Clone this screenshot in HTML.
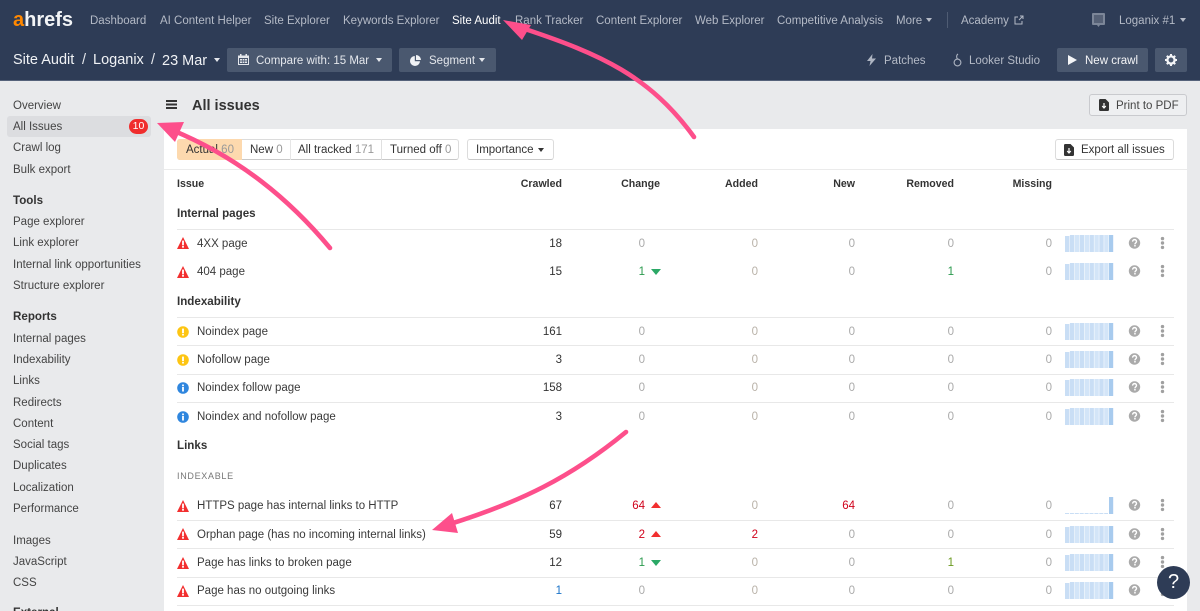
<!DOCTYPE html>
<html><head><meta charset="utf-8"><title>All issues</title>
<style>
*{box-sizing:border-box}
html,body{margin:0;padding:0;width:1200px;height:611px;overflow:hidden}
body{position:relative;background:#e9eaec;font-family:"Liberation Sans",sans-serif;font-size:11.5px;color:#333}
#p{position:absolute;left:0;top:0;width:1200px;height:611px;overflow:hidden}
.t{position:absolute;white-space:nowrap;line-height:16px;height:16px;margin-top:1px}
.n{top:12px;color:#b4bac6}
.hb{position:absolute;top:48px;height:24px;background:#4a586f;border-radius:2px}
.w{color:#e4e7ec}
.s{left:13px;color:#444}
.sb{left:13px;font-weight:bold;color:#333;font-size:11.6px}
.h{font-weight:bold;font-size:10.6px;top:175px;color:#333}
.g{left:177px;font-weight:bold;font-size:11.6px;color:#333}
.line{position:absolute;left:177px;width:997px;height:1px;background:#e8e8e8}
.r{position:absolute;left:0;width:1200px;height:16px;line-height:16px;margin-top:1px}
.r>span{position:absolute;white-space:nowrap}
.l{left:197px;color:#3a3a3a}
.c1{right:638px;color:#333}
.c2{right:555px;color:#aaa}
.c3{right:442px;color:#b9b2a8}
.c4{right:345px;color:#aaa}
.c5{right:246px;color:#aaa}
.c6{right:148px;color:#aaa}
.red{color:#d0021b!important}
.grn{color:#2b9a4e!important}
.r svg{position:absolute;left:0;top:0;overflow:visible;margin-top:-1px}
.btn{position:absolute;background:#fff;border:1px solid #dcdcdc;border-bottom-color:#c9c9c9;border-radius:3px}
.car{position:absolute;width:0;height:0;border-left:3.5px solid transparent;border-right:3.5px solid transparent;border-top:4px solid currentColor}
.gy{color:#999}
</style></head><body><div id="p">
<svg width="0" height="0" style="position:absolute">
<defs>
<symbol id="warn" viewBox="0 0 12 11" preserveAspectRatio="none" overflow="visible"><path d="M6 0 12 11H0Z" fill="#f22f2f"/><rect x="5.1" y="3.3" width="1.8" height="4.2" fill="#fff"/><rect x="5.1" y="8.1" width="1.8" height="1.7" fill="#fff"/></symbol>
<symbol id="yel" viewBox="0 0 12 12"><circle cx="6" cy="6" r="5.8" fill="#fdc513"/><rect x="5.1" y="2.6" width="1.8" height="4.4" fill="#fff"/><rect x="5.1" y="7.8" width="1.8" height="1.7" fill="#fff"/></symbol>
<symbol id="blu" viewBox="0 0 12 12"><circle cx="6" cy="6" r="5.8" fill="#2f86de"/><rect x="5.1" y="5" width="1.8" height="4.5" fill="#fff"/><rect x="5.1" y="2.5" width="1.8" height="1.7" fill="#fff"/></symbol>
<symbol id="bars" viewBox="0 0 50 17" overflow="visible">
<g fill="#c9def5"><rect x="0" y="1" width="4.4" height="16"/><rect x="4.9" y="0" width="4.4" height="17"/><rect x="9.8" y="0" width="4.4" height="17" fill="#d3e5f8"/><rect x="14.7" y="0" width="4.4" height="17"/><rect x="19.6" y="0" width="4.4" height="17" fill="#d3e5f8"/><rect x="24.5" y="0" width="4.4" height="17"/><rect x="29.4" y="0" width="4.4" height="17" fill="#d3e5f8"/><rect x="34.3" y="0" width="4.4" height="17"/><rect x="39.2" y="0" width="4.4" height="17" fill="#d3e5f8"/></g>
<rect x="44" y="0" width="4.2" height="17" fill="#a8cbee"/></symbol>
<symbol id="low" viewBox="0 0 50 17" overflow="visible">
<path d="M0 16.5H43" stroke="#c9def5" stroke-width="1" stroke-dasharray="4 .9"/><rect x="44" y="0" width="4.2" height="17" fill="#a8cbee"/></symbol>
<symbol id="tail" viewBox="0 0 120 20" overflow="visible">
<circle cx="70.5" cy="10" r="5.7" fill="#aaa"/><path d="M68.6 8.6c0-2.6 3.9-2.6 3.9-.2 0 1.5-1.6 1.5-1.6 3" fill="none" stroke="#fff" stroke-width="1.4"/><rect x="70.2" y="12" width="1.5" height="1.5" fill="#fff"/>
<circle cx="98.5" cy="5.6" r="1.7" fill="#a0a0a0"/><circle cx="98.5" cy="10" r="1.7" fill="#a0a0a0"/><circle cx="98.5" cy="14.4" r="1.7" fill="#a0a0a0"/></symbol>
<symbol id="doc" viewBox="0 0 10 12"><path d="M0 1.2C0 .5.5 0 1.2 0H6.5L10 3.5V10.8C10 11.5 9.5 12 8.8 12H1.2C.5 12 0 11.5 0 10.8Z" fill="#333"/><path d="M5 4V8.5M3.2 7 5 9 6.8 7" stroke="#fff" stroke-width="1.2" fill="none"/></symbol>
</defs></svg>

<!-- header -->
<div style="position:absolute;left:0;top:0;width:1200px;height:81px;background:#2e3c56;border-bottom:1px solid #55627a"></div>
<span class="t" style="left:13px;top:10px;font-size:20px;line-height:18px;height:18px;font-weight:bold;color:#f2f4f6"><span style="color:#ff8800">a</span>hrefs</span>
<span class="t n" style="left:90px">Dashboard</span>
<span class="t n" style="left:160px">AI Content Helper</span>
<span class="t n" style="left:264px">Site Explorer</span>
<span class="t n" style="left:343px">Keywords Explorer</span>
<span class="t n" style="left:452px;color:#fff">Site Audit</span>
<span class="t n" style="left:515px">Rank Tracker</span>
<span class="t n" style="left:596px">Content Explorer</span>
<span class="t n" style="left:695px">Web Explorer</span>
<span class="t n" style="left:777px">Competitive Analysis</span>
<span class="t n" style="left:896px">More</span>
<span class="car" style="left:926px;top:18px;color:#b4bac6"></span>
<div style="position:absolute;left:947px;top:12px;width:1px;height:16px;background:#4f5c73"></div>
<span class="t n" style="left:961px">Academy</span>
<svg style="position:absolute;left:1014px;top:15px" width="10" height="10" viewBox="0 0 10 10" fill="none" stroke="#b4bac6" stroke-width="1"><path d="M4 2H1V9H8V6M5 5 9 1M6 1H9V4"/></svg>
<svg style="position:absolute;left:1092px;top:13px" width="13" height="14" viewBox="0 0 13 14"><path d="M1 0H12A1 1 0 0 1 13 1V11A1 1 0 0 1 12 12H8L6.5 14 5 12H1A1 1 0 0 1 0 11V1A1 1 0 0 1 1 0Z" fill="#7c8698"/><rect x="2" y="2" width="9" height="8" fill="#566176"/></svg>
<span class="t n" style="left:1119px">Loganix #1</span>
<span class="car" style="left:1180px;top:18px;color:#b4bac6"></span>

<span class="t" style="left:13px;top:51px;font-size:14.5px;color:#f0f2f5">Site Audit</span>
<span class="t" style="left:82px;top:51px;font-size:14.5px;color:#e4e7ec">/</span>
<span class="t" style="left:93px;top:51px;font-size:14.5px;color:#f0f2f5">Loganix</span>
<span class="t" style="left:151px;top:51px;font-size:14.5px;color:#e4e7ec">/</span>
<span class="t" style="left:162px;top:52px;font-size:14.5px;color:#f0f2f5">23 Mar</span>
<span class="car" style="left:214px;top:58px;color:#e4e7ec"></span>
<div class="hb" style="left:227px;width:165px"></div>
<svg style="position:absolute;left:238px;top:54px" width="11" height="11" viewBox="0 0 11 11"><path d="M0 1.5H11V11H0Z" fill="#e4e7ec"/><rect x="2" y="0" width="1.5" height="2.5" fill="#e4e7ec"/><rect x="7.5" y="0" width="1.5" height="2.5" fill="#e4e7ec"/><path d="M1 4H10V10H1Z" fill="#4a586f"/><path d="M2 5H4V6.5H2ZM4.6 5H6.4V6.5H4.6ZM7 5H9V6.5H7ZM2 7.5H4V9H2ZM4.6 7.5H6.4V9H4.6ZM7 7.5H9V9H7Z" fill="#e4e7ec"/></svg>
<span class="t w" style="left:256px;top:52px">Compare with: 15 Mar</span>
<span class="car" style="left:376px;top:58px;color:#e4e7ec"></span>
<div class="hb" style="left:399px;width:97px"></div>
<svg style="position:absolute;left:410px;top:55px" width="11" height="11" viewBox="0 0 11 11"><path d="M4.8 1A5 5 0 1 0 10 6.2H4.8Z" fill="#f0f2f5"/><path d="M6 0A5 5 0 0 1 11 5H6Z" fill="#f0f2f5"/></svg>
<span class="t w" style="left:429px;top:52px">Segment</span>
<span class="car" style="left:479px;top:58px;color:#e4e7ec"></span>

<svg style="position:absolute;left:867px;top:54px" width="9" height="12" viewBox="0 0 9 12"><path d="M5.5 0 0 7H3.5L2.5 12 9 4.5H5Z" fill="#aeb5c2"/></svg>
<span class="t n" style="left:884px;top:52px">Patches</span>
<svg style="position:absolute;left:953px;top:53px" width="9" height="14" viewBox="0 0 9 14" fill="none" stroke="#aeb5c2" stroke-width="1.1"><circle cx="4.5" cy="9.5" r="3.4"/><path d="M4.5 6C3 4 3.5 2 5 1"/></svg>
<span class="t n" style="left:969px;top:52px">Looker Studio</span>
<div class="hb" style="left:1057px;width:91px"></div>
<svg style="position:absolute;left:1068px;top:55px" width="9" height="10" viewBox="0 0 9 10"><path d="M0 0 9 5 0 10Z" fill="#f4f5f7"/></svg>
<span class="t" style="left:1085px;top:52px;color:#f4f5f7">New crawl</span>
<div class="hb" style="left:1155px;width:32px"></div>
<svg style="position:absolute;left:1165px;top:54px" width="12" height="12" viewBox="0 0 12 12"><circle cx="6" cy="6" r="3.6" fill="none" stroke="#f4f5f7" stroke-width="2.3"/><path d="M6 0V2M6 10V12M0 6H2M10 6H12M1.8 1.8 3.2 3.2M8.8 8.8 10.2 10.2M1.8 10.2 3.2 8.8M8.8 3.2 10.2 1.8" stroke="#f4f5f7" stroke-width="2"/></svg>

<!-- sidebar -->
<span class="t s" style="top:97px">Overview</span>
<div style="position:absolute;left:7px;top:116px;width:144px;height:21px;background:#dcdde0;border-radius:3px"></div>
<span class="t s" style="top:118px">All Issues</span>
<div style="position:absolute;left:129px;top:119px;width:19px;height:15px;background:#f02d2d;border-radius:8px;color:#fff;font-size:10.5px;line-height:15px;text-align:center">10</div>
<span class="t s" style="top:139px">Crawl log</span>
<span class="t s" style="top:161px">Bulk export</span>
<span class="t sb" style="top:192px">Tools</span>
<span class="t s" style="top:213px">Page explorer</span>
<span class="t s" style="top:234px">Link explorer</span>
<span class="t s" style="top:256px">Internal link opportunities</span>
<span class="t s" style="top:277px">Structure explorer</span>
<span class="t sb" style="top:308px">Reports</span>
<span class="t s" style="top:330px">Internal pages</span>
<span class="t s" style="top:351px">Indexability</span>
<span class="t s" style="top:372px">Links</span>
<span class="t s" style="top:394px">Redirects</span>
<span class="t s" style="top:415px">Content</span>
<span class="t s" style="top:436px">Social tags</span>
<span class="t s" style="top:457px">Duplicates</span>
<span class="t s" style="top:479px">Localization</span>
<span class="t s" style="top:500px">Performance</span>
<span class="t s" style="top:532px">Images</span>
<span class="t s" style="top:553px">JavaScript</span>
<span class="t s" style="top:574px">CSS</span>
<span class="t sb" style="top:604px">External</span>

<!-- title -->
<svg style="position:absolute;left:166px;top:100px" width="11" height="9" viewBox="0 0 11 9"><path d="M0 0H11V2H0ZM0 3.5H11V5.5H0ZM0 7H11V9H0Z" fill="#333"/></svg>
<span class="t" style="left:192px;top:97px;font-size:14.5px;font-weight:bold;color:#333">All issues</span>
<div class="btn" style="left:1089px;top:94px;width:98px;height:22px;background:#eeeff1;border-color:#c9cace"></div>
<svg style="position:absolute;left:1099px;top:99px;width:10px;height:12px"><use href="#doc"/></svg>
<span class="t" style="left:1116px;top:97px;color:#444">Print to PDF</span>

<!-- panel -->
<div style="position:absolute;left:164px;top:129px;width:1023px;height:482px;background:#fff"></div>
<div class="btn" style="left:177px;top:139px;width:282px;height:21px"></div>
<div style="position:absolute;left:177px;top:139px;width:65px;height:21px;background:#fdd9ae;border-radius:3px 0 0 3px"></div>
<div style="position:absolute;left:290px;top:139px;width:1px;height:21px;background:#e6e6e6"></div>
<div style="position:absolute;left:381px;top:139px;width:1px;height:21px;background:#e0e0e0"></div>
<span class="t" style="left:186px;top:141px">Actual <span class="gy">60</span></span>
<span class="t" style="left:250px;top:141px">New <span class="gy">0</span></span>
<span class="t" style="left:298px;top:141px">All tracked <span class="gy">171</span></span>
<span class="t" style="left:390px;top:141px">Turned off <span class="gy">0</span></span>
<div class="btn" style="left:467px;top:139px;width:87px;height:21px"></div>
<span class="t" style="left:476px;top:141px">Importance</span>
<span class="car" style="left:538px;top:148px;color:#333"></span>
<div class="btn" style="left:1055px;top:139px;width:119px;height:21px"></div>
<svg style="position:absolute;left:1064px;top:144px;width:10px;height:12px"><use href="#doc"/></svg>
<span class="t" style="left:1081px;top:141px">Export all issues</span>
<div style="position:absolute;left:164px;top:169px;width:1023px;height:1px;background:#ebebeb"></div>

<span class="t h" style="left:177px">Issue</span>
<span class="t h" style="right:638px">Crawled</span>
<span class="t h" style="right:540px">Change</span>
<span class="t h" style="right:442px">Added</span>
<span class="t h" style="right:345px">New</span>
<span class="t h" style="right:246px">Removed</span>
<span class="t h" style="right:148px">Missing</span>

<span class="t g" style="top:205px">Internal pages</span>
<div class="line" style="top:229px"></div>
<div class="r" style="top:235px"><svg width="12" height="12" style="left:177px;top:2px"><use href="#warn"/></svg><span class="l">4XX page</span><span class="c1">18</span><span class="c2">0</span><span class="c3">0</span><span class="c4">0</span><span class="c5">0</span><span class="c6">0</span><svg width="50" height="17" style="left:1065px;top:0"><use href="#bars"/></svg><svg width="120" height="20" style="left:1064px;top:-2px"><use href="#tail"/></svg></div>
<div class="r" style="top:263px"><svg width="12" height="12" style="left:177px;top:3px"><use href="#warn"/></svg><span class="l">404 page</span><span class="c1">15</span><span class="c2 grn">1</span><svg width="10" height="6" style="left:651px;top:6px"><path d="M0 0H10L5 6Z" fill="#2ba866"/></svg><span class="c3">0</span><span class="c4">0</span><span class="c5 grn">1</span><span class="c6">0</span><svg width="50" height="17" style="left:1065px;top:0"><use href="#bars"/></svg><svg width="120" height="20" style="left:1064px;top:-2px"><use href="#tail"/></svg></div>

<span class="t g" style="top:293px">Indexability</span>
<div class="line" style="top:317px"></div>
<div class="r" style="top:323px"><svg width="12" height="12" style="left:177px;top:3px"><use href="#yel"/></svg><span class="l">Noindex page</span><span class="c1">161</span><span class="c2">0</span><span class="c3">0</span><span class="c4">0</span><span class="c5">0</span><span class="c6">0</span><svg width="50" height="17" style="left:1065px;top:0"><use href="#bars"/></svg><svg width="120" height="20" style="left:1064px;top:-2px"><use href="#tail"/></svg></div>
<div class="line" style="top:345px"></div>
<div class="r" style="top:351px"><svg width="12" height="12" style="left:177px;top:3px"><use href="#yel"/></svg><span class="l">Nofollow page</span><span class="c1">3</span><span class="c2">0</span><span class="c3">0</span><span class="c4">0</span><span class="c5">0</span><span class="c6">0</span><svg width="50" height="17" style="left:1065px;top:0"><use href="#bars"/></svg><svg width="120" height="20" style="left:1064px;top:-2px"><use href="#tail"/></svg></div>
<div class="line" style="top:374px"></div>
<div class="r" style="top:379px"><svg width="12" height="12" style="left:177px;top:3px"><use href="#blu"/></svg><span class="l">Noindex follow page</span><span class="c1">158</span><span class="c2">0</span><span class="c3">0</span><span class="c4">0</span><span class="c5">0</span><span class="c6">0</span><svg width="50" height="17" style="left:1065px;top:0"><use href="#bars"/></svg><svg width="120" height="20" style="left:1064px;top:-2px"><use href="#tail"/></svg></div>
<div class="line" style="top:402px"></div>
<div class="r" style="top:408px"><svg width="12" height="12" style="left:177px;top:3px"><use href="#blu"/></svg><span class="l">Noindex and nofollow page</span><span class="c1">3</span><span class="c2">0</span><span class="c3">0</span><span class="c4">0</span><span class="c5">0</span><span class="c6">0</span><svg width="50" height="17" style="left:1065px;top:0"><use href="#bars"/></svg><svg width="120" height="20" style="left:1064px;top:-2px"><use href="#tail"/></svg></div>

<span class="t g" style="top:437px">Links</span>
<span class="t" style="left:177px;top:467px;font-size:9px;letter-spacing:.7px;color:#777">INDEXABLE</span>

<div class="r" style="top:497px"><svg width="12" height="12" style="left:177px;top:3px"><use href="#warn"/></svg><span class="l">HTTPS page has internal links to HTTP</span><span class="c1">67</span><span class="c2 red">64</span><svg width="10" height="6" style="left:651px;top:5px"><path d="M5 0 10 6H0Z" fill="#f22f2f"/></svg><span class="c3">0</span><span class="c4 red">64</span><span class="c5">0</span><span class="c6">0</span><svg width="50" height="17" style="left:1065px;top:0"><use href="#low"/></svg><svg width="120" height="20" style="left:1064px;top:-2px"><use href="#tail"/></svg></div>
<div class="line" style="top:520px"></div>
<div class="r" style="top:526px"><svg width="12" height="12" style="left:177px;top:2px"><use href="#warn"/></svg><span class="l">Orphan page (has no incoming internal links)</span><span class="c1">59</span><span class="c2 red">2</span><svg width="10" height="6" style="left:651px;top:5px"><path d="M5 0 10 6H0Z" fill="#f22f2f"/></svg><span class="c3 red">2</span><span class="c4">0</span><span class="c5">0</span><span class="c6">0</span><svg width="50" height="17" style="left:1065px;top:0"><use href="#bars"/></svg><svg width="120" height="20" style="left:1064px;top:-2px"><use href="#tail"/></svg></div>
<div class="line" style="top:548px"></div>
<div class="r" style="top:554px"><svg width="12" height="12" style="left:177px;top:3px"><use href="#warn"/></svg><span class="l">Page has links to broken page</span><span class="c1">12</span><span class="c2 grn">1</span><svg width="10" height="6" style="left:651px;top:6px"><path d="M0 0H10L5 6Z" fill="#2ba866"/></svg><span class="c3">0</span><span class="c4">0</span><span class="c5" style="color:#6b9a1f">1</span><span class="c6">0</span><svg width="50" height="17" style="left:1065px;top:0"><use href="#bars"/></svg><svg width="120" height="20" style="left:1064px;top:-2px"><use href="#tail"/></svg></div>
<div class="line" style="top:577px"></div>
<div class="r" style="top:582px"><svg width="12" height="12" style="left:177px;top:3px"><use href="#warn"/></svg><span class="l">Page has no outgoing links</span><span class="c1" style="color:#1a73c8">1</span><span class="c2">0</span><span class="c3">0</span><span class="c4">0</span><span class="c5">0</span><span class="c6">0</span><svg width="50" height="17" style="left:1065px;top:0"><use href="#bars"/></svg><svg width="120" height="20" style="left:1064px;top:-2px"><use href="#tail"/></svg></div>
<div class="line" style="top:605px"></div>

<!-- arrows -->
<svg style="position:absolute;left:0;top:0" width="1200" height="611" fill="none">
<g stroke="#fd4f8b" stroke-width="4.6" stroke-linecap="round">
<path d="M694 137C650 76 600 54 525 29"/>
<path d="M330 248C290 200 240 158 172 130"/>
<path d="M626 432C570 478 520 502 450 524"/>
</g>
<g fill="#fd4f8b">
<path d="M503 20 531 25 522 40Z"/>
<path d="M157 123 184 122 175 142Z"/>
<path d="M432 530 452 513 458 533Z"/>
</g>
</svg>

<!-- help -->
<div style="position:absolute;left:1157px;top:566px;width:33px;height:33px;border-radius:50%;background:#2e3c56;color:#fff;font-size:20px;line-height:33px;text-align:center">?</div>
</div></body></html>
